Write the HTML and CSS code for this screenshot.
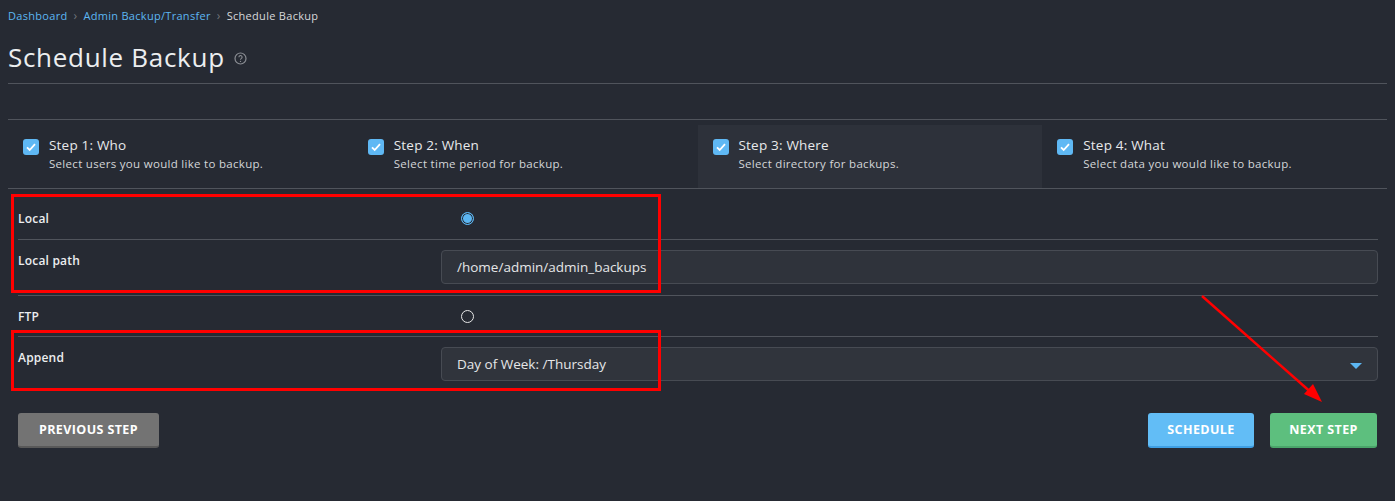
FILE: index.html
```html
<!DOCTYPE html>
<html>
<head>
<meta charset="utf-8">
<link rel="stylesheet" href="styles.css">
</head>
<body>
<div class="page">
  <nav class="crumbs">
    <a>Dashboard</a><span class="sep">›</span><a>Admin Backup/Transfer</a><span class="sep">›</span><span class="cur">Schedule Backup</span>
  </nav>
  <h1 class="title">Schedule Backup
    <svg class="help" width="13" height="13" viewBox="0 0 13 13"><circle cx="6.5" cy="6.5" r="5.5" fill="none" stroke="#8a8d93" stroke-width="1.2"/><path d="M4.9 5.2a1.6 1.6 0 1 1 2.3 1.4c-.5.3-.7.6-.7 1.1" fill="none" stroke="#8a8d93" stroke-width="1.1"/><circle cx="6.5" cy="9.4" r=".7" fill="#8a8d93"/></svg>
  </h1>
  <div class="gap"></div>
  <div class="steps">
    <div class="step"><span class="cb"><svg width="16" height="16" viewBox="0 0 16 16"><rect width="16" height="16" rx="3" fill="#5fb8f4"/><path d="M4 8.3l2.7 2.7L12 5.2" fill="none" stroke="#fff" stroke-width="1.8"/></svg></span><div><div class="st">Step 1: Who</div><div class="sd">Select users you would like to backup.</div></div></div>
    <div class="step"><span class="cb"><svg width="16" height="16" viewBox="0 0 16 16"><rect width="16" height="16" rx="3" fill="#5fb8f4"/><path d="M4 8.3l2.7 2.7L12 5.2" fill="none" stroke="#fff" stroke-width="1.8"/></svg></span><div><div class="st">Step 2: When</div><div class="sd">Select time period for backup.</div></div></div>
    <div class="step active"><span class="cb"><svg width="16" height="16" viewBox="0 0 16 16"><rect width="16" height="16" rx="3" fill="#5fb8f4"/><path d="M4 8.3l2.7 2.7L12 5.2" fill="none" stroke="#fff" stroke-width="1.8"/></svg></span><div><div class="st">Step 3: Where</div><div class="sd">Select directory for backups.</div></div></div>
    <div class="step"><span class="cb"><svg width="16" height="16" viewBox="0 0 16 16"><rect width="16" height="16" rx="3" fill="#5fb8f4"/><path d="M4 8.3l2.7 2.7L12 5.2" fill="none" stroke="#fff" stroke-width="1.8"/></svg></span><div><div class="st">Step 4: What</div><div class="sd">Select data you would like to backup.</div></div></div>
  </div>
  <div class="form">
    <div class="row r-radio"><div class="lbl">Local</div><div class="ctl"><span class="radio on"></span></div></div>
    <div class="row r-field"><div class="lbl">Local path</div><div class="ctl"><div class="input">/home/admin/admin_backups</div></div></div>
    <div class="row r-radio"><div class="lbl">FTP</div><div class="ctl"><span class="radio"></span></div></div>
    <div class="row r-field last"><div class="lbl">Append</div><div class="ctl"><div class="input select">Day of Week: /Thursday<span class="caret"></span></div></div></div>
  </div>
  <div class="actions">
    <button class="btn gray">PREVIOUS STEP</button>
    <div class="right">
      <button class="btn blue">SCHEDULE</button>
      <button class="btn green">NEXT STEP</button>
    </div>
  </div>
</div>
<div class="mark m1"></div>
<div class="mark m2"></div>
<svg class="arrow" width="1395" height="501" viewBox="0 0 1395 501">
  <line x1="1202" y1="296" x2="1314" y2="395" stroke="#ff0000" stroke-width="2.5"/>
  <polygon points="1322,402 1304,394 1313,384" fill="#ff0000"/>
</svg>
</body>
</html>
```
FILE: styles.css
```css
html, body { margin: 0; padding: 0; }
body {
  background: #262a33;
  font-family: "Open Sans", "Noto Sans", sans-serif;
  color: #e6e7e9;
  width: 1395px;
  height: 501px;
  overflow: hidden;
  position: relative;
}
.page { padding: 0 8px; }
.crumbs {
  font-size: 11px;
  letter-spacing: 0.3px;
  height: 15px;
  padding-top: 8px;
  display: flex;
  align-items: center;
  line-height: 15px;
}
.crumbs a { color: #5cb6f2; }
.crumbs .sep { color: #6f7379; margin: 0 6px; font-size: 12px; }
.crumbs .cur { color: #d7d8da; }
.title {
  margin: 0;
  font-weight: 400;
  font-size: 26px;
  letter-spacing: 0.7px;
  color: #eceef0;
  height: 52px;
  padding-top: 8px;
  line-height: 34px;
  border-bottom: 1px solid #50545c;
  display: flex;
  align-items: center;
}
.help { margin-left: 9px; margin-top: 2px; }
.gap { height: 35px; border-bottom: 1px solid #50545c; }
.steps {
  display: grid;
  grid-template-columns: repeat(4, 1fr);
  height: 68px;
  border-bottom: 1px solid #50545c;
}
.step {
  display: flex;
  align-items: flex-start;
  padding: 17px 0 0 15px;
}
.step.active { background: #2d313a; margin-top: 5px; padding-top: 12px; }
.cb { width: 16px; height: 16px; margin-right: 10px; margin-top: 1px; }
.st { font-size: 13.5px; letter-spacing: 0.2px; line-height: 16px; color: #e8e9eb; }
.sd { font-size: 11.5px; letter-spacing: 0.3px; line-height: 14px; margin-top: 4px; color: #d4d6d9; }
.form { margin-left: 10px; margin-right: 9px; }
.row {
  display: flex;
  border-bottom: 1px solid #50545c;
}
.row.last { border-bottom: none; }
.lbl {
  width: 423px;
  font-size: 12px;
  font-weight: 600;
  letter-spacing: 0.2px;
  color: #eceef0;
}
.ctl { flex: 1; }
.r-radio { height: 40px; }
.r-radio .lbl { padding-top: 21px; }
.r-radio .ctl { padding-top: 23px; padding-left: 20px; }
.r-radio:first-child { height: 50px; }
.r-radio:first-child .lbl { padding-top: 21px; }
.r-radio:first-child .ctl { padding-top: 23px; }
.r-radio:nth-child(3) .lbl { padding-top: 12px; }
.r-radio:nth-child(3) .ctl { padding-top: 14px; }
.r-field { height: 55px; }
.r-field .lbl { padding-top: 12px; }
.r-field .ctl { padding-top: 10px; }
.input {
  height: 34px;
  box-sizing: border-box;
  border: 1px solid #474b53;
  border-radius: 4px;
  background: #2f333b;
  font-size: 13.5px;
  color: #e5e6e8;
  padding: 0 15px;
  display: flex;
  align-items: center;
  position: relative;
}
.select { background: #30343c; }
.caret {
  position: absolute;
  right: 15px;
  top: 15px;
  width: 0; height: 0;
  border-left: 6px solid transparent;
  border-right: 6px solid transparent;
  border-top: 6px solid #5cb6f2;
}
.radio {
  display: block;
  width: 13px;
  height: 13px;
  border-radius: 50%;
  box-sizing: border-box;
  border: 1.5px solid #e8e8e8;
}
.radio.on {
  border: 1.5px solid #5cb6f2;
  background: #5cb6f2;
  box-shadow: inset 0 0 0 1px #262a33;
}
.actions {
  display: flex;
  justify-content: space-between;
  margin: 21px 10px 0 10px;
}
.right { display: flex; gap: 16px; }
.btn {
  font-family: "Open Sans", "Noto Sans", sans-serif;
  font-weight: 700;
  font-size: 12.5px;
  letter-spacing: 0.4px;
  color: #fff;
  border: none;
  border-radius: 3px;
  height: 35px;
  padding: 0;
}
.btn.gray { background: #737373; border-bottom: 2px solid #595959; width: 141px; }
.btn.blue { background: #62bdf6; border-bottom: 2px solid #3f9fe3; width: 106px; }
.btn.green { background: #5dbf7e; border-bottom: 2px solid #4aa56a; width: 107px; }
.mark {
  position: absolute;
  border: 3px solid #ff0000;
  box-sizing: border-box;
}
.m1 { left: 11px; top: 194px; width: 650px; height: 99px; }
.m2 { left: 11px; top: 330px; width: 650px; height: 61px; }
.arrow { position: absolute; left: 0; top: 0; pointer-events: none; }
```
